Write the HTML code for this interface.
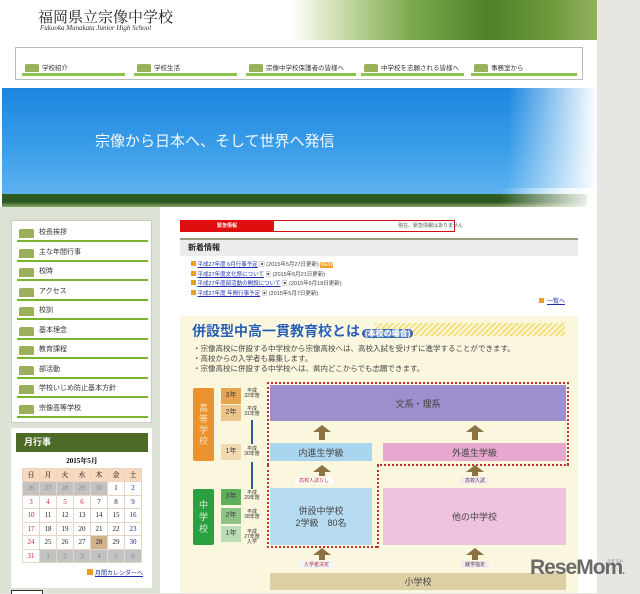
<!DOCTYPE html>
<html><head><meta charset="utf-8"><style>
*{margin:0;padding:0;box-sizing:border-box}
body{width:640px;height:593px;overflow:hidden;background:#e6e7e3;font-family:"Liberation Sans","Noto Sans CJK JP",sans-serif;position:relative}
.a{position:absolute;white-space:nowrap}
.page{left:0;top:0;width:597px;height:593px;background:#fff}
.nav{left:15px;top:47px;width:568px;height:33px;border:1px solid #bbb;background:#fff}
.ni{top:16px;height:12px;font-size:6.5px;color:#333;border-bottom:3px solid #8cc34a;line-height:9px;padding-left:20px}
.ic{position:absolute;left:3px;top:0;width:14px;height:8px;background:#9ab05a;border-radius:2px 2px 0 0}
.side{left:0;top:207px;width:160px;height:386px;background:#dde2d6}
.menu{left:11px;top:220px;width:141px;height:203px;background:#fff;border:1px solid #c8ccc0}
.mi{left:5px;width:131px;height:14px;border-bottom:2px solid #78b52e;font-size:7px;color:#333;padding-left:22px;line-height:10px}
.mi .ic{left:2px;top:1px;width:15px;height:9px}
table{border-collapse:collapse;font-family:"Liberation Serif","Noto Serif CJK SC",serif;font-size:7px}
td{border:1px solid #e7d6c6;width:17px;height:13.5px;text-align:center;color:#222}
th{background:#f8d9bd;border:1px solid #e7d6c6;height:13px;font-weight:normal;font-size:7px}
.g{background:#c2c2c2;color:#888}.r{color:#d02020}.b{color:#2020b0}
.box{font-size:9px;color:#444;text-align:center;display:flex;align-items:center;justify-content:center}
.arr{width:0;height:0;border-left:9px solid transparent;border-right:9px solid transparent;border-bottom:7px solid #8b7242}
.ast{width:6px;background:#8b7242}
.yr{width:20px;height:16px;font-size:7px;color:#444;text-align:center;line-height:16px}
.lbl{font-size:5px;color:#333;line-height:5px;text-align:center;width:16px}
</style></head><body>
<div class="a page"></div>
<div class="a" style="left:38px;top:6px;font-size:15px;color:#222;font-family:'Liberation Serif','Noto Serif CJK SC',serif">福岡県立宗像中学校</div>
<div class="a" style="left:40px;top:24px;font-size:7px;font-style:italic;color:#333;font-family:'Liberation Serif',serif">Fukuoka Munakata Junior High School</div>
<div class="a" style="left:290px;top:0;width:307px;height:40px;background:linear-gradient(90deg,#fff 0%,#cfe0b0 15%,#7aa84a 40%,#4f7f2a 65%,#6f9a3a 85%,#90b060 100%)"></div>
<div class="a nav">
<div class="a ni" style="left:6px;width:103px"><span class="ic"></span>学校紹介</div>
<div class="a ni" style="left:118px;width:103px"><span class="ic"></span>学校生活</div>
<div class="a ni" style="left:230px;width:110px"><span class="ic"></span>宗像中学校保護者の皆様へ</div>
<div class="a ni" style="left:345px;width:103px"><span class="ic"></span>中学校を志願される皆様へ</div>
<div class="a ni" style="left:455px;width:106px"><span class="ic"></span>事務室から</div>
</div>
<div class="a" style="left:2px;top:88px;width:595px;height:119px;background:linear-gradient(90deg,rgba(255,255,255,0) 85%,#fff 100%),linear-gradient(180deg,#1c86df 0%,#3a9de8 50%,#5ab0ef 85%,#60b2ee 100%)"></div>
<div class="a" style="left:2px;top:194px;width:585px;height:13px;background:linear-gradient(180deg,#2f5f22,#2a5520 60%,#8aa868);"></div>
<div class="a" style="left:500px;top:188px;width:97px;height:19px;background:linear-gradient(90deg,rgba(255,255,255,0),#fff)"></div>
<div class="a" style="left:95px;top:130px;font-size:15px;color:#f4f8ff">宗像から日本へ、そして世界へ発信</div>
<div class="a side"></div>
<div class="a menu">
<div class="a mi" style="top:7px"><span class="ic"></span>校長挨拶</div>
<div class="a mi" style="top:27px"><span class="ic"></span>主な年間行事</div>
<div class="a mi" style="top:46px"><span class="ic"></span>校時</div>
<div class="a mi" style="top:66px"><span class="ic"></span>アクセス</div>
<div class="a mi" style="top:85px"><span class="ic"></span>校訓</div>
<div class="a mi" style="top:105px"><span class="ic"></span>基本理念</div>
<div class="a mi" style="top:124px"><span class="ic"></span>教育課程</div>
<div class="a mi" style="top:144px"><span class="ic"></span>部活動</div>
<div class="a mi" style="top:163px"><span class="ic"></span>学校いじめ防止基本方針</div>
<div class="a mi" style="top:183px"><span class="ic"></span>宗像高等学校</div>
</div>
<div class="a" style="left:11px;top:428px;width:141px;height:160px;background:#fff;border-radius:2px"></div>
<div class="a" style="left:16px;top:433px;width:132px;height:19px;background:#4d6b26;color:#fff;font-size:9px;font-weight:bold;line-height:19px;padding-left:8px">月行事</div>
<div class="a" style="left:16px;top:456px;width:132px;text-align:center;font-size:7px;font-weight:bold;font-family:'Liberation Serif','Noto Serif CJK SC',serif">2015年5月</div>
<table class="a" style="left:22px;top:468px">
<tr><th>日</th><th>月</th><th>火</th><th>水</th><th>木</th><th>金</th><th>土</th></tr>
<tr><td class="g">26</td><td class="g">27</td><td class="g">28</td><td class="g">29</td><td class="g">30</td><td>1</td><td class="b">2</td></tr>
<tr><td class="r">3</td><td class="r">4</td><td class="r">5</td><td class="r">6</td><td>7</td><td>8</td><td class="b">9</td></tr>
<tr><td class="r">10</td><td>11</td><td>12</td><td>13</td><td>14</td><td>15</td><td class="b">16</td></tr>
<tr><td class="r">17</td><td>18</td><td>19</td><td>20</td><td>21</td><td>22</td><td class="b">23</td></tr>
<tr><td class="r">24</td><td>25</td><td>26</td><td>27</td><td style="background:#d2b48c">28</td><td>29</td><td class="b">30</td></tr>
<tr><td class="r">31</td><td class="g">1</td><td class="g">2</td><td class="g">3</td><td class="g">4</td><td class="g">5</td><td class="g">6</td></tr>
</table>
<div class="a" style="left:87px;top:569px;width:6px;height:6px;background:#e8a020"></div>
<div class="a" style="left:95px;top:568px;font-size:6px;color:#2030b0;text-decoration:underline">月間カレンダーへ</div>
<div class="a" style="left:11px;top:590px;width:32px;height:4px;border:1px solid #333;border-bottom:none;background:#fff"></div>
<div class="a" style="left:180px;top:220px;width:275px;height:12px;border:1px solid #d01010;background:#fff"></div>
<div class="a" style="left:180px;top:220px;width:94px;height:12px;background:#e00f0f;color:#fff;font-size:5px;text-align:center;line-height:12px;font-weight:bold">緊急情報</div>
<div class="a" style="left:398px;top:222px;font-size:5px;color:#555">現在、緊急情報はありません</div>
<div class="a" style="left:180px;top:238px;width:398px;height:18px;background:#ececec;border-top:2px solid #9a9c7a;font-size:8px;font-weight:bold;line-height:16px;padding-left:8px;color:#222">新着情報</div>
<div class="a" style="left:191px;top:261px;font-size:5.5px;line-height:9.5px;color:#444">
<div><span style="display:inline-block;width:5px;height:5px;background:#e8a020"></span> <u style="color:#2030b0">平成27年度 6月行事予定</u> ▣ (2015年5月27日更新) <span style="background:#f0a030;color:#fff">NEW</span></div>
<div><span style="display:inline-block;width:5px;height:5px;background:#e8a020"></span> <u style="color:#2030b0">平成27年度文化祭について</u> ▣ (2015年5月21日更新)</div>
<div><span style="display:inline-block;width:5px;height:5px;background:#e8a020"></span> <u style="color:#2030b0">平成27年度部活動の開設について</u> ▣ (2015年5月18日更新)</div>
<div><span style="display:inline-block;width:5px;height:5px;background:#e8a020"></span> <u style="color:#2030b0">平成27年度 年間行事予定</u> ▣ (2015年5月7日更新)</div>
</div>
<div class="a" style="left:539px;top:298px;width:5px;height:5px;background:#e8a020"></div>
<div class="a" style="left:547px;top:296px;font-size:6px;color:#2030b0;text-decoration:underline">一覧へ</div>
<div class="a" style="left:180px;top:316px;width:398px;height:277px;background:#fbf7de"></div>
<div class="a" style="left:375px;top:323px;width:190px;height:13px;background:repeating-linear-gradient(135deg,#f3e07a 0 2px,#fbf7de 2px 4px)"></div>
<div class="a" style="left:192px;top:321px;font-size:14px;font-weight:bold;color:#2a5fb0;text-shadow:0 0 2px #fff">併設型中高一貫教育校とは<span style="font-size:8px;background:#2a5fb0;color:#fff;border-radius:6px;padding:0 3px;margin-left:2px">(本校の場合)</span></div>
<div class="a" style="left:193px;top:344px;font-size:7.5px;line-height:10px;color:#444">・宗像高校に併設する中学校から宗像高校へは、高校入試を受けずに進学することができます。<br>・高校からの入学者も募集します。<br>・宗像高校に併設する中学校へは、県内どこからでも志願できます。</div>
<div class="a box" style="left:193px;top:388px;width:21px;height:73px;background:#e9922e;color:#fbe2c0;flex-direction:column;font-size:9px;line-height:11px;border-radius:2px">高<br>等<br>学<br>校</div>
<div class="a yr" style="left:221px;top:388px;background:#e7a550">3年</div>
<div class="a yr" style="left:221px;top:405px;background:#ecc58c">2年</div>
<div class="a yr" style="left:221px;top:444px;background:#f0d9b3">1年</div>
<div class="a box" style="left:193px;top:489px;width:21px;height:56px;background:#2aa040;color:#d8f0d8;flex-direction:column;font-size:9px;line-height:12px;border-radius:2px">中<br>学<br>校</div>
<div class="a yr" style="left:221px;top:489px;background:#5fae5a">3年</div>
<div class="a yr" style="left:221px;top:508px;background:#8dc485">2年</div>
<div class="a yr" style="left:221px;top:526px;background:#bcdcb5">1年</div>
<div class="a lbl" style="left:244px;top:389px">平成<br>32年度</div>
<div class="a lbl" style="left:244px;top:407px">平成<br>31年度</div>
<div class="a lbl" style="left:244px;top:447px">平成<br>30年度</div>
<div class="a lbl" style="left:244px;top:491px">平成<br>29年度</div>
<div class="a lbl" style="left:244px;top:510px">平成<br>28年度</div>
<div class="a lbl" style="left:244px;top:530px">平成<br>27年度<br>入学</div>
<div class="a" style="left:251px;top:420px;width:2px;height:24px;background:#2a5a9a"></div>
<div class="a" style="left:251px;top:462px;width:2px;height:27px;background:#2a5a9a"></div>
<div class="a" style="left:267px;top:382px;width:302px;height:83px;border:2px dotted #c03030;border-bottom:none"></div>
<div class="a" style="left:267px;top:465px;width:2px;height:83px;border-left:2px dotted #c03030"></div>
<div class="a" style="left:267px;top:546px;width:110px;height:2px;border-top:2px dotted #c03030"></div>
<div class="a" style="left:377px;top:465px;width:2px;height:83px;border-left:2px dotted #c03030"></div>
<div class="a" style="left:377px;top:464px;width:192px;height:2px;border-top:2px dotted #c03030"></div>
<div class="a box" style="left:270px;top:385px;width:296px;height:36px;background:#9d8fcc">文系・理系</div>
<div class="a box" style="left:270px;top:443px;width:102px;height:18px;background:#a9d5ef">内進生学級</div>
<div class="a box" style="left:383px;top:443px;width:183px;height:18px;background:#e6a8cf">外進生学級</div>
<div class="a box" style="left:270px;top:488px;width:102px;height:57px;background:#b7dcf2;line-height:12px">併設中学校<br>2学級　80名</div>
<div class="a box" style="left:383px;top:488px;width:183px;height:57px;background:#efc3dd">他の中学校</div>
<div class="a box" style="left:270px;top:573px;width:296px;height:17px;background:#dccfa4">小学校</div>
<div class="a arr" style="left:313px;top:425px"></div><div class="a ast" style="left:319px;top:432px;height:8px"></div>
<div class="a arr" style="left:466px;top:425px"></div><div class="a ast" style="left:472px;top:432px;height:8px"></div>
<div class="a arr" style="left:313px;top:465px"></div><div class="a ast" style="left:319px;top:472px;height:4px"></div>
<div class="a arr" style="left:466px;top:465px"></div><div class="a ast" style="left:472px;top:472px;height:4px"></div>
<div class="a arr" style="left:313px;top:548px"></div><div class="a ast" style="left:319px;top:555px;height:5px"></div>
<div class="a arr" style="left:466px;top:548px"></div><div class="a ast" style="left:472px;top:555px;height:5px"></div>
<div class="a" style="left:295px;top:477px;font-size:5px;color:#c03030;background:#fff;padding:0 4px">高校入試なし</div>
<div class="a" style="left:461px;top:477px;font-size:5px;color:#444;background:#fbe8f2;padding:0 4px">高校入試</div>
<div class="a" style="left:300px;top:561px;font-size:5px;color:#c03030;background:#eef4fb;padding:0 4px">入学者決定</div>
<div class="a" style="left:461px;top:561px;font-size:5px;color:#444;background:#fbe8f2;padding:0 4px">就学指定</div>
<div class="a" style="left:530px;top:556px;font-size:21px;font-weight:bold;color:#6a6a6a;letter-spacing:-1px;font-family:'Liberation Sans',sans-serif">ReseMom<span style="font-size:10px">.</span></div>
<div class="a" style="left:607px;top:558px;font-size:4px;color:#777">リセマム</div>
</body></html>
